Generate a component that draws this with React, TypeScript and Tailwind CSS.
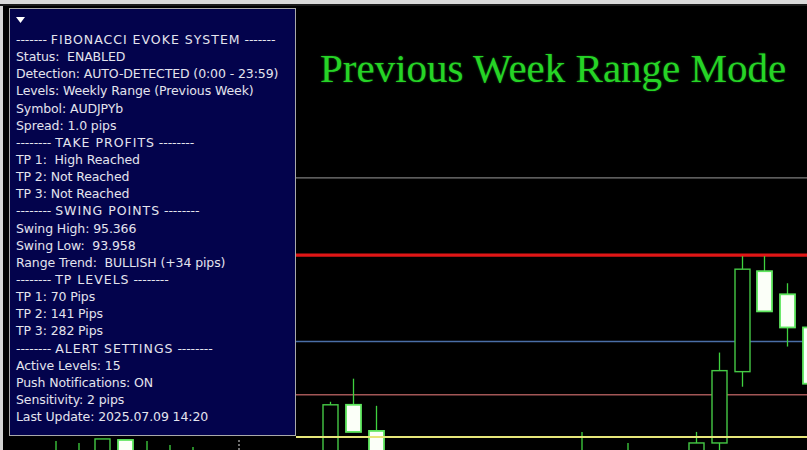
import React from "react";

type Row = string | { head: string; dashes: string };

const rows: Row[] = [
  { head: "FIBONACCI EVOKE SYSTEM", dashes: "-------" },
  "Status:  ENABLED",
  "Detection: AUTO-DETECTED (0:00 - 23:59)",
  "Levels: Weekly Range (Previous Week)",
  "Symbol: AUDJPYb",
  "Spread: 1.0 pips",
  { head: "TAKE PROFITS", dashes: "--------" },
  "TP 1:  High Reached",
  "TP 2: Not Reached",
  "TP 3: Not Reached",
  { head: "SWING POINTS", dashes: "--------" },
  "Swing High: 95.366",
  "Swing Low:  93.958",
  "Range Trend:  BULLISH (+34 pips)",
  { head: "TP LEVELS", dashes: "--------" },
  "TP 1: 70 Pips",
  "TP 2: 141 Pips",
  "TP 3: 282 Pips",
  { head: "ALERT SETTINGS", dashes: "--------" },
  "Active Levels: 15",
  "Push Notifications: ON",
  "Sensitivity: 2 pips",
  "Last Update: 2025.07.09 14:20",
];

// x, bodyTop, bodyBottom, wickTop, wickBottom, filled
const candles: [number, number, number, number, number, boolean][] = [
  [95, 439, 460, 439, 460, false],
  [118, 440, 460, 440, 460, true],
  [323, 405, 460, 402, 460, false],
  [346, 405, 432, 379, 432, true],
  [369, 431, 460, 406, 460, true],
  [689, 443, 460, 432, 460, false],
  [712, 371, 443, 353, 460, false],
  [735, 270, 372, 257, 387, false],
  [757, 272, 312, 257, 312, true],
  [780, 295, 328, 284, 347, true],
  [803, 328, 384, 310, 384, true],
];

const wicks: [number, number][] = [
  [56, 441],
  [79, 443],
  [147, 441],
  [170, 445],
  [193, 447],
  [582, 432],
  [628, 443],
];

function Chart() {
  return (
    <svg className="absolute inset-0 h-full w-full" viewBox="3 8 804 442" preserveAspectRatio="none">
      <line x1="296" y1="179" x2="807" y2="179" stroke="#7c7c7c" strokeWidth="1.2" />
      <line x1="296" y1="256" x2="807" y2="256" stroke="#e01616" strokeWidth="3" />
      <line x1="296" y1="342" x2="807" y2="342" stroke="#4a6ea6" strokeWidth="1.3" />
      <line x1="296" y1="395" x2="807" y2="395" stroke="#a25656" strokeWidth="1.3" />
      {wicks.map(([x, y], i) => (
        <line key={i} x1={x} y1={y} x2={x} y2={450} stroke="#3fd23f" strokeWidth="1.3" />
      ))}
      <line x1="239" y1="440" x2="239" y2="450" stroke="#e0e0e0" strokeWidth="1" strokeDasharray="2 2" />
      {candles.map(([x, bt, bb, wt, wb, filled], i) => (
        <g key={i}>
          <line x1={x + 7.5} y1={wt} x2={x + 7.5} y2={wb} stroke="#3fd23f" strokeWidth="1.3" />
          <rect
            x={x}
            y={bt}
            width="15"
            height={bb - bt}
            fill={filled ? "#fbfff8" : "#000"}
            stroke={filled ? "#5ee65e" : "#45c845"}
            strokeWidth={filled ? 1.8 : 1.4}
          />
        </g>
      ))}
      <line x1="296" y1="437" x2="807" y2="437" stroke="#e6e67a" strokeWidth="2" />
    </svg>
  );
}

export default function App() {
  return (
    <div className="flex h-[450px] w-[807px] flex-col overflow-hidden bg-black">
      <div className="h-[6px] shrink-0 bg-[#dadada] border-b-2 border-[#1a1a1a]" />
      <div className="flex flex-1">
        <div className="w-[3px] shrink-0 bg-[#d4d4d4]" />
        <div className="relative flex-1">
          <Chart />
          <div className="absolute left-[6px] top-[2px] h-[428px] w-[287px] border border-[#a9a9a9] bg-[#03034c] px-[6px] pt-[5px] text-[12.5px] leading-[17.14px] text-[#e4e4ee] [font-family:'DejaVu_Sans',sans-serif] tracking-[-0.1px]">
            <div className="h-[17px] pt-[3px]">
              <svg width="9" height="6" viewBox="0 0 9 6">
                <path d="M0 0 L9 0 L4.5 6 Z" fill="#ffffff" />
              </svg>
            </div>
            {rows.map((r, i) =>
              typeof r === "string" ? (
                <div key={i} className="whitespace-pre">
                  {r}
                </div>
              ) : (
                <div key={i} className="whitespace-pre">
                  {r.dashes} <span className="tracking-[1px]">{r.head}</span> {r.dashes}
                </div>
              )
            )}
          </div>
          <div className="absolute left-[317px] top-[42px] text-[41px] leading-none text-[#26d426] [font-family:'Liberation_Serif',serif] [text-shadow:0_0_2px_rgba(40,220,40,0.5)]">
            Previous Week Range Mode
          </div>
        </div>
      </div>
    </div>
  );
}
